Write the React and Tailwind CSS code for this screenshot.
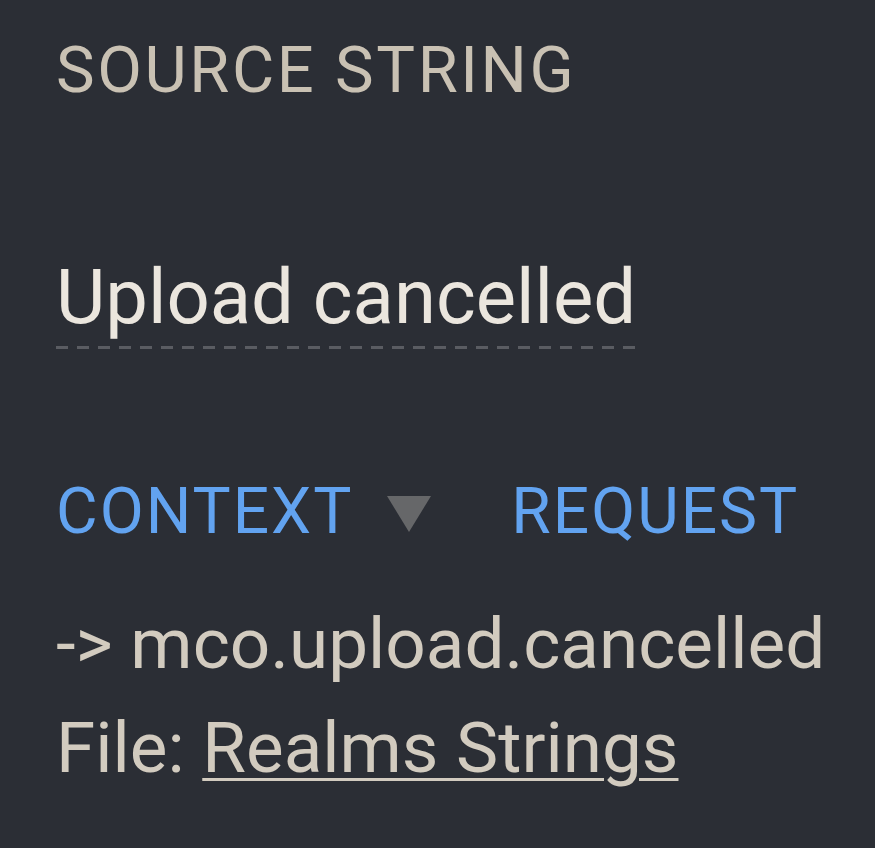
export default function App() {
  return (
    <div
      className="min-h-screen w-full bg-[#2b2e35] pl-[56px] pt-[32px]"
      style={{ fontFamily: "Roboto, 'Noto Sans', sans-serif" }}
    >
      {/* Source string */}
      <div className="text-[65px] leading-[76px] tracking-[2.6px] text-[#c9c1b3]">
        SOURCE STRING
      </div>

      <div className="mt-[150px] inline-block">
        <div className="text-[76px] leading-[78px] text-[#ebe6de]">
          Upload cancelled
        </div>
        <div className="mt-[10px] h-[3px] w-full bg-[repeating-linear-gradient(90deg,#5a5c62_0px,#5a5c62_12px,transparent_12px,transparent_21px)]" />
      </div>

      {/* Context / request tabs */}
      <div className="mt-[125px] flex items-center text-[64px] leading-[76px] tracking-[2px] text-[#62a3f0]">
        <span>CONTEXT</span>
        <span className="ml-[34px] mr-[80px] mt-[4px] h-0 w-0 border-x-[22px] border-t-[36px] border-x-transparent border-t-[#666769]" />
        <span>REQUEST</span>
      </div>

      <div className="mt-[42px] text-[71px] leading-[104px] text-[#d2cbbf]">
        <div>-&gt; mco.upload.cancelled</div>
        <div>
          File:{" "}
          <span className="underline decoration-[3px] underline-offset-[6px]">
            Realms Strings
          </span>
        </div>
      </div>
    </div>
  );
}
